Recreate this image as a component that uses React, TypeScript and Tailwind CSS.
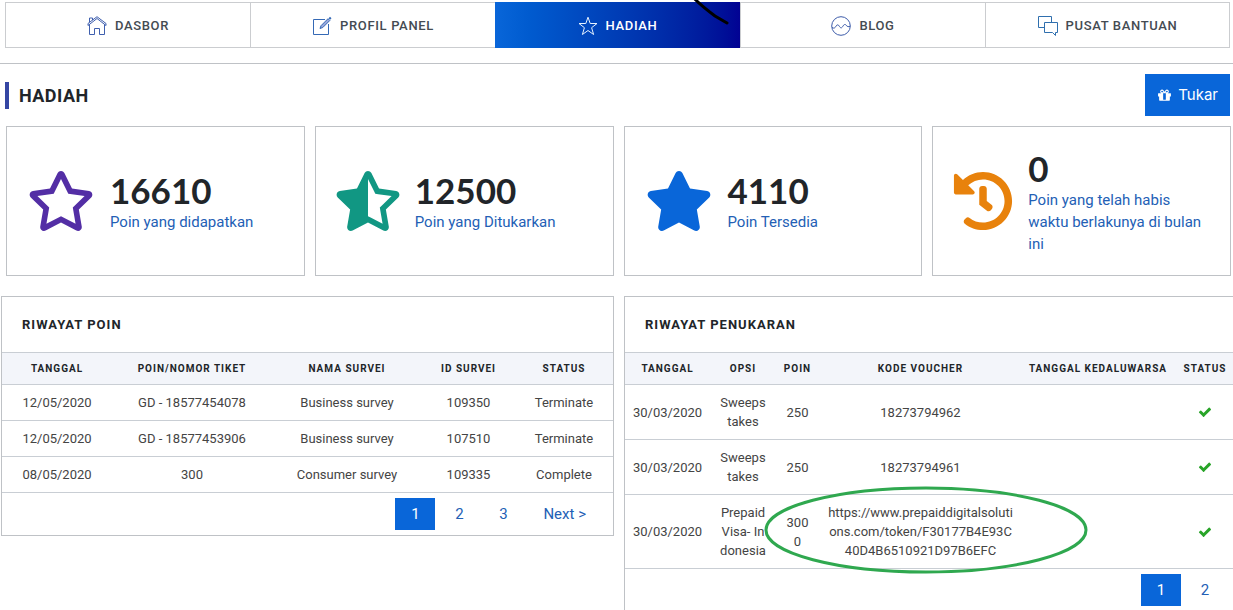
import type { ReactNode } from "react";
import { FaHistory, FaRegStar, FaStar, FaStarHalfAlt } from "react-icons/fa";

const HomeIcon = () => (
  <svg viewBox="0 0 20 20" className="h-5 w-5" fill="none" stroke="#3f5fae" strokeWidth="1">
    <path d="M1 9.500 10 2.500l9 7M1 7.500 10 .7l9 6.800" />
    <path d="M1 7.500v2M19 7.500v2" />
    <path d="M2.500 6v-4h3v2" />
    <path d="M2.500 8.500v10h5v-6h5v6h5v-10" />
  </svg>
);

const EditIcon = () => (
  <svg viewBox="0 0 20 20" className="h-5 w-5" fill="none" stroke="#3569b5" strokeWidth="1">
    <path d="M13 3.500H1.500v15h15V8" />
    <path d="m8 12.500 1-2.800 7-7 1.800 1.800-7 7z" fill="#9aa9dc" />
    <path d="m17.300 1.500 1.500 1.500" strokeWidth="2" />
  </svg>
);

const StarIcon = () => (
  <svg viewBox="0 0 20 20" className="h-5 w-5" fill="none" stroke="#e6f2ff" strokeWidth="1">
    <path d="m10 1.200 2.200 6.300h6.800l-5.400 4.200 2 6.800-5.600-4-5.600 4 2-6.800L1 7.500h6.800z" />
  </svg>
);

const WaveIcon = () => (
  <svg viewBox="0 0 20 20" className="h-5 w-5" fill="none" stroke="#3c5ba9" strokeWidth="1">
    <circle cx="10" cy="10" r="9.300" />
    <path d="M1 11.500c2 1.200 3 .5 4-1.300s2.300-1.800 3.300 0 2.200 2.400 3.400.3 2.300-2.700 3.500-1.200 2.300 1.700 3.800.9" />
  </svg>
);

const ChatIcon = () => (
  <svg viewBox="0 0 20 20" className="h-5 w-5" fill="none" stroke="#2f6fae" strokeWidth="1">
    <path d="M6.500 11.500h-6V.500h13v6" />
    <path d="M6.500 6.500h13v10h-2v3l-3-3h-8z" />
  </svg>
);

const GiftIcon = () => (
  <svg viewBox="0 0 1792 1792" className="h-[15px] w-[15px]" fill="currentColor" aria-hidden="true">
    <path d="M1055 1356v-716h-320v716q0 25 18 38.500t46 13.500h192q28 0 46-13.500t18-38.500zm-456-844h195l-126-161q-26-31-69-31-40 0-68 28t-28 68 28 68 68 28zm688-96q0-40-28-68t-68-28q-43 0-69 31l-125 161h194q40 0 68-28t28-68zm376 256v320q0 14-9 23t-23 9h-96v416q0 40-28 68t-68 28h-1088q-40 0-68-28t-28-68v-416h-96q-14 0-23-9t-9-23v-320q0-14 9-23t23-9h440q-93 0-158.500-65.500t-65.500-158.500 65.500-158.500 158.500-65.500q107 0 168 77l128 165 128-165q61-77 168-77 93 0 158.500 65.500t65.500 158.500-65.500 158.500-158.500 65.500h440q14 0 23 9t9 23z" />
  </svg>
);

const CheckIcon = () => (
  <svg viewBox="0 0 1792 1792" className="mx-auto h-[14px] w-[14px]" fill="#28a428" role="img" aria-label="Selesai">
    <path d="M1671 566q0 40-28 68l-724 724-136 136q-28 28-68 28t-68-28l-136-136-362-362q-28-28-28-68t28-68l136-136q28-28 68-28t68 28l294 295 656-657q28-28 68-28t68 28l136 136q28 28 28 68z" />
  </svg>
);

const tabs = [
  { label: "DASBOR", icon: <HomeIcon /> },
  { label: "PROFIL PANEL", icon: <EditIcon /> },
  { label: "HADIAH", icon: <StarIcon />, active: true },
  { label: "BLOG", icon: <WaveIcon /> },
  { label: "PUSAT BANTUAN", icon: <ChatIcon /> },
];

const stats = [
  { value: "16610", label: "Poin yang didapatkan", icon: <FaRegStar className="h-[60px] w-[68px] shrink-0 text-[#532ea5]" /> },
  { value: "12500", label: "Poin yang Ditukarkan", icon: <FaStarHalfAlt className="h-[60px] w-[64px] shrink-0 text-[#119783]" /> },
  { value: "4110", label: "Poin Tersedia", icon: <FaStar className="h-[60px] w-[68px] shrink-0 text-[#0966d9]" /> },
  {
    value: "0",
    label: "Poin yang telah habis waktu berlakunya di bulan ini",
    icon: <FaHistory className="h-[60px] w-[60px] shrink-0 text-[#e8820c]" />,
  },
];

const points = [
  ["12/05/2020", "GD - 18577454078", "Business survey", "109350", "Terminate"],
  ["12/05/2020", "GD - 18577453906", "Business survey", "107510", "Terminate"],
  ["08/05/2020", "300", "Consumer survey", "109335", "Complete"],
];

const redemptions = [
  { date: "30/03/2020", option: "Sweepstakes", points: "250", code: "18273794962" },
  { date: "30/03/2020", option: "Sweepstakes", points: "250", code: "18273794961" },
  {
    date: "30/03/2020",
    option: "Prepaid Visa- Indonesia",
    points: "3000",
    code: "https://www.prepaiddigitalsolutions.com/token/F30177B4E93C40D4B6510921D97B6EFC",
  },
];

function Panel({ title, children }: { title: string; children: ReactNode }) {
  return (
    <section className="relative border border-[#bfc2c6]">
      <h2 className="px-5 py-[17px] text-[13px] leading-[21px] font-bold tracking-[1px] text-[#212529]">{title}</h2>
      {children}
    </section>
  );
}

function HeadRow({ labels }: { labels: string[] }) {
  return (
    <thead>
      <tr className="h-8 border-y border-[#c9ced4] bg-[#f3f5fa] text-[10px] tracking-[1px] text-[#212529]">
        {labels.map((label) => (
          <th key={label} scope="col" className="font-bold whitespace-nowrap">
            {label}
          </th>
        ))}
      </tr>
    </thead>
  );
}

function Pagination({ label, pages, next }: { label: string; pages: number[]; next?: boolean }) {
  return (
    <nav aria-label={label} className="flex justify-end gap-1 py-[5px] pr-[11px] text-[15px] text-[#2360b5]">
      {pages.map((page) => (
        <button
          key={page}
          type="button"
          className={page === 1 ? "h-8 w-10 bg-[#0966d9] text-white" : "h-8 w-10"}
        >
          {page}
        </button>
      ))}
      {next && (
        <button type="button" className="h-8 px-4">
          Next &gt;
        </button>
      )}
    </nav>
  );
}

export default function App() {
  return (
    <div className="min-h-screen overflow-x-clip bg-white font-['Roboto',sans-serif] text-[#212529]">
      {/* Main tabs */}
      <nav className="relative border-b border-[#bfc2c6] pt-[2px] pr-[3px] pb-[15px] pl-[5px]">
        <div className="grid grid-cols-5">
          {tabs.map((tab) => (
            <a
              key={tab.label}
              href="#"
              className={
                tab.active
                  ? "flex h-[46px] items-center justify-center gap-2 bg-linear-to-r from-[#0966d9] to-[#020293] pt-px text-[13px] font-medium tracking-wider text-white"
                  : "flex h-[46px] items-center justify-center gap-2 border-y border-l border-[#cbcdd0] pt-px text-[13px] font-medium tracking-wider text-[#444b52] last:border-r"
              }
            >
              {tab.icon}
              {tab.label}
            </a>
          ))}
        </div>
        <svg viewBox="0 0 40 28" className="absolute top-0 left-[690px] h-7 w-10" fill="none" aria-hidden="true">
          <path d="M3-3C9 4 17 10 25 16l12 7" stroke="#000" strokeWidth="3" strokeLinecap="round" />
        </svg>
      </nav>

      {/* Page heading */}
      <header className="flex items-center justify-between py-[10px] pr-[3px] pl-[5px]">
        <h1 className="border-l-4 border-[#3546a3] pl-[10px] text-lg leading-[27px] font-bold tracking-wide">HADIAH</h1>
        <button
          type="button"
          className="flex h-[42px] items-center gap-[6px] bg-[#0966d9] px-3 font-['Inter',sans-serif] text-[15px] text-white"
        >
          <GiftIcon />
          Tukar
        </button>
      </header>

      {/* Point totals */}
      <div className="grid grid-cols-4 gap-[10px] pr-[2px] pl-[6px]">
        {stats.map((stat) => (
          <div key={stat.label} className="flex h-[150px] items-center gap-[15px] border border-[#bfc2c6] px-5">
            {stat.icon}
            <div>
              <p className="font-['Lato',sans-serif] text-[35px] leading-[42px] font-bold">{stat.value}</p>
              <p className="text-[15px] leading-[22px] text-[#2360b5]">{stat.label}</p>
            </div>
          </div>
        ))}
      </div>

      {/* History tables */}
      <div className="-mr-1 grid grid-cols-2 items-start gap-[10px] pt-5 pl-px">
        <Panel title="RIWAYAT POIN">
          <table className="w-full table-fixed border-collapse text-center text-[13px] text-[#444]">
            <colgroup>
              <col className="w-[110px]" />
              <col className="w-[160px]" />
              <col className="w-[150px]" />
              <col className="w-[93px]" />
              <col className="w-[98px]" />
            </colgroup>
            <HeadRow labels={["TANGGAL", "POIN/NOMOR TIKET", "NAMA SURVEI", "ID SURVEI", "STATUS"]} />
            <tbody>
              {points.map((row) => (
                <tr key={row[0] + row[1]} className="h-9 border-b border-[#c9ced4]">
                  {row.map((cell) => (
                    <td key={cell}>{cell}</td>
                  ))}
                </tr>
              ))}
            </tbody>
          </table>
          <Pagination label="Riwayat poin" pages={[1, 2, 3]} next />
        </Panel>

        <Panel title="RIWAYAT PENUKARAN">
          <table className="w-full table-fixed border-collapse text-center text-[13px] leading-[19px] text-[#444]">
            <colgroup>
              <col className="w-[85px]" />
              <col className="w-[66px]" />
              <col className="w-[43px]" />
              <col className="w-[203px]" />
              <col className="w-[152px]" />
              <col className="w-[62px]" />
            </colgroup>
            <HeadRow labels={["TANGGAL", "OPSI", "POIN", "KODE VOUCHER", "TANGGAL KEDALUWARSA", "STATUS"]} />
            <tbody>
              {redemptions.map((item) => (
                <tr key={item.code} className="border-b border-[#c9ced4]">
                  <td className="whitespace-nowrap">{item.date}</td>
                  <td className="px-[9px] py-2 break-all">{item.option}</td>
                  <td className="px-2 py-2 break-all">{item.points}</td>
                  <td className="px-2 py-2 break-all">{item.code}</td>
                  <td />
                  <td>
                    <CheckIcon />
                  </td>
                </tr>
              ))}
            </tbody>
          </table>
          <Pagination label="Riwayat penukaran" pages={[1, 2]} />
          <svg
            viewBox="0 0 324 88"
            className="pointer-events-none absolute top-[189px] left-[139px] h-[88px] w-[324px]"
            fill="none"
            aria-hidden="true"
          >
            <ellipse cx="162" cy="44" rx="160" ry="42" stroke="#2fa84f" strokeWidth="3" />
          </svg>
        </Panel>
      </div>
    </div>
  );
}
